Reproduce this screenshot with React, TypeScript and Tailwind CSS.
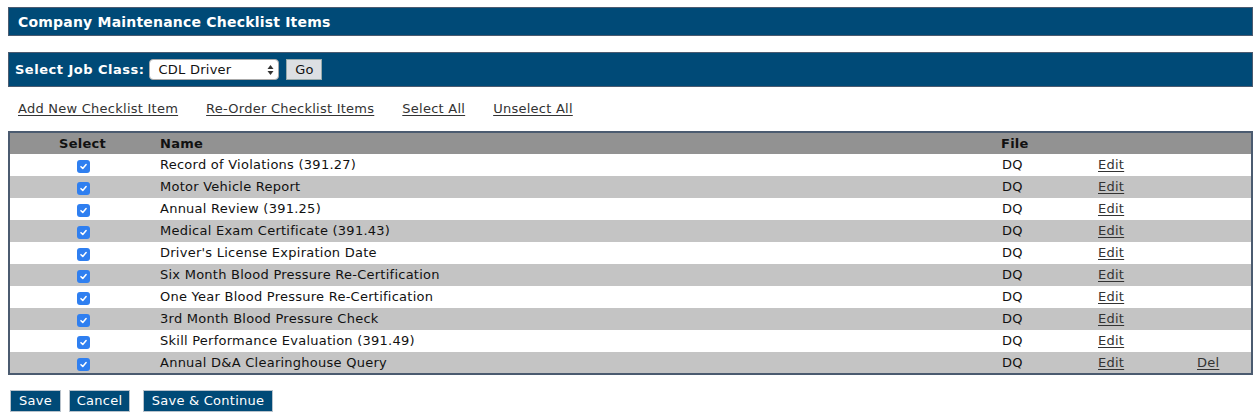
import React from 'react';

const ITEMS = [
  'Record of Violations (391.27)',
  'Motor Vehicle Report',
  'Annual Review (391.25)',
  'Medical Exam Certificate (391.43)',
  "Driver's License Expiration Date",
  'Six Month Blood Pressure Re-Certification',
  'One Year Blood Pressure Re-Certification',
  '3rd Month Blood Pressure Check',
  'Skill Performance Evaluation (391.49)',
  'Annual D&A Clearinghouse Query',
];

const LINKS = ['Add New Checklist Item', 'Re-Order Checklist Items', 'Select All', 'Unselect All'];

function Check() {
  return (
    <span className="inline-flex items-center justify-center w-[13px] h-[13px] rounded-[3px] bg-[#2f7ff0]">
      <svg width="9" height="9" viewBox="0 0 10 10" fill="none">
        <path d="M2.2 5.2 L4.2 7.1 L7.9 2.8" stroke="white" strokeWidth="1.7" strokeLinecap="round" strokeLinejoin="round" />
      </svg>
    </span>
  );
}

export default function App() {
  return (
    <div className="w-[1259px] h-[418px] bg-white pl-2 pr-[6px] pt-[7px] text-[13px] tracking-[0.25px] text-[#111] font-['Verdana','DejaVu_Sans',sans-serif]">
      {/* page title */}
      <div className="h-[29px] flex items-center bg-[#004a77] border border-[#4b5b70] px-[9px] pt-[2px]">
        <h1 className="text-white font-bold text-[14px] tracking-[0.2px]">Company Maintenance Checklist Items</h1>
      </div>

      {/* job class picker */}
      <div className="mt-[16px] h-[35px] flex items-center bg-[#004a77] border border-[#4b5b70] px-[6px]">
        <span className="text-white font-bold tracking-[0.5px]">Select Job Class:</span>
        <div className="ml-[5px] w-[130px] h-[21px] bg-white rounded-[4px] border border-[#aaa] flex items-center justify-between pl-[8px] pr-[4px]">
          <span>CDL Driver</span>
          <svg width="7" height="12" viewBox="0 0 7 12">
            <path d="M3.5 1 L6.5 5 L0.5 5 Z M3.5 11 L6.5 7 L0.5 7 Z" fill="#333" />
          </svg>
        </div>
        <button className="ml-[7px] w-[36px] h-[21px] bg-[#dcdfe3] border border-[#9aa] flex items-center justify-center">Go</button>
      </div>

      {/* action links */}
      <div className="h-[44px] flex items-center gap-[28px] pl-[10px] text-[#333]">
        {LINKS.map(l => (
          <a key={l} className="underline underline-offset-2">{l}</a>
        ))}
      </div>

      {/* checklist table */}
      <table className="w-full table-fixed border-collapse border-2 border-[#4b5b70]">
        <thead>
          <tr className="bg-[#929292] h-[22px] font-bold">
            <th className="w-[150px] text-center pr-[4px] font-bold">Select</th>
            <th className="text-left pl-[1px] font-bold">Name</th>
            <th className="w-[97px] text-left font-bold">File</th>
            <th className="w-[99px]"></th>
            <th className="w-[55px]"></th>
          </tr>
        </thead>
        <tbody>
          {ITEMS.map((name, i) => (
            <tr key={name} className={i % 2 === 0 ? 'bg-white h-[22px]' : 'bg-[#c4c4c4] h-[22px]'}>
              <td className="text-center leading-none pt-[3px] pr-[2px]"><Check /></td>
              <td className="pl-[1px]">{name}</td>
              <td className="pl-[1px]">DQ</td>
              <td className="text-[#333]"><a className="underline underline-offset-2">Edit</a></td>
              <td className="text-[#333]">
                {i === ITEMS.length - 1 && <a className="underline underline-offset-2">Del</a>}
              </td>
            </tr>
          ))}
        </tbody>
      </table>

      {/* form buttons */}
      <div className="mt-[15px] flex pl-[2px]">
        <button className="w-[51px] h-[22px] bg-[#004a77] text-white border border-[#b9c3cc]">Save</button>
        <button className="ml-[8px] w-[61px] h-[22px] bg-[#004a77] text-white border border-[#b9c3cc]">Cancel</button>
        <button className="ml-[13px] w-[130px] h-[22px] bg-[#004a77] text-white border border-[#b9c3cc]">Save &amp; Continue</button>
      </div>
    </div>
  );
}
